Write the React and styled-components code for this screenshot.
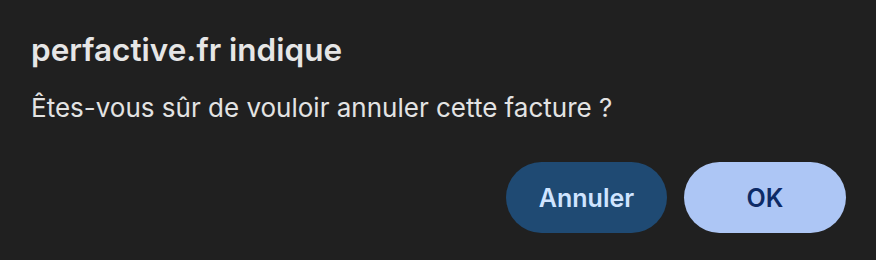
import React from "react";
import styled, { createGlobalStyle } from "styled-components";

const GlobalStyle = createGlobalStyle`
  html, body {
    margin: 0;
    padding: 0;
    background: #202020;
  }
  body {
    font-family: Inter, "Noto Sans", sans-serif;
  }
`;

const Dialog = styled.div`
  width: 876px;
  height: 260px;
  box-sizing: border-box;
  background: #202020;
  padding: 30px 30px 27px 31px;
  display: flex;
  flex-direction: column;
`;

const Title = styled.h1`
  margin: 0;
  font-size: 31.5px;
  line-height: 40px;
  font-weight: 600;
  color: #e6e6e6;
`;

const Message = styled.p`
  margin: 21px 0 0;
  font-size: 26px;
  line-height: 34px;
  font-weight: 400;
  color: #e3e3e3;
`;

const Actions = styled.div`
  margin-top: auto;
  display: flex;
  justify-content: flex-end;
  gap: 17px;
`;

const Button = styled.button`
  width: ${({ $width }) => $width}px;
  height: 71px;
  border: none;
  border-radius: 36px;
  font-family: inherit;
  font-size: 25px;
  font-weight: 600;
  background: ${({ $primary }) => ($primary ? "#adc6f5" : "#1f4a73")};
  color: ${({ $primary }) => ($primary ? "#0d2a66" : "#cfe4ff")};
  cursor: pointer;
`;

export default function App() {
  return (
    <>
      <GlobalStyle />
      <Dialog>
        <Title>perfactive.fr indique</Title>
        <Message>Êtes-vous sûr de vouloir annuler cette facture ?</Message>
        <Actions>
          <Button $width={161}>Annuler</Button>
          <Button $width={162} $primary>
            OK
          </Button>
        </Actions>
      </Dialog>
    </>
  );
}
